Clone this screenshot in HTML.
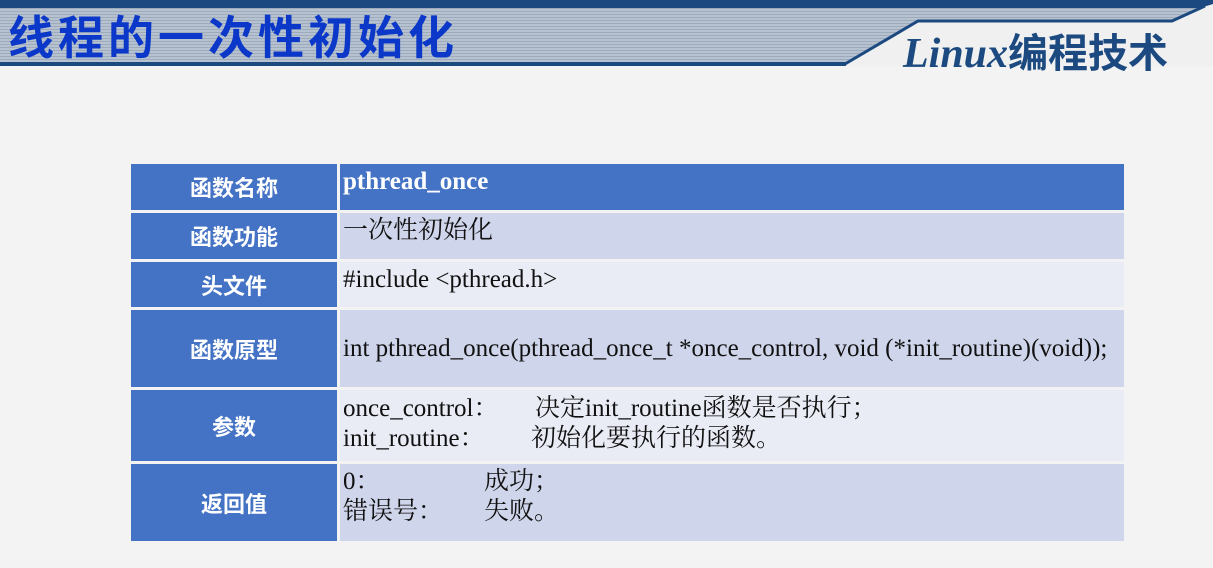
<!DOCTYPE html>
<html><head><meta charset="utf-8"><style>
body{margin:0;width:1213px;height:568px;background:#f3f3f3;position:relative;overflow:hidden;font-family:"Liberation Serif","Noto Serif CJK SC",serif;}
.c{position:absolute;box-sizing:border-box}
.l{left:131px;width:206px;background:#4472c4;color:#fff;font-family:"Liberation Sans","Noto Sans CJK SC",sans-serif;font-weight:bold;font-size:22px;display:flex;align-items:center;justify-content:center}
.r{left:340px;width:784px;padding-left:3px;font-size:25px;color:#111;line-height:30px;white-space:nowrap}
.a{background:#cfd5ea}.b{background:#e9ebf5}
.i{display:inline-block}
</style></head><body>
<svg class="c" style="left:0;top:0" width="1213" height="70">
<defs><pattern id="s" width="4" height="3" patternUnits="userSpaceOnUse"><rect width="4" height="3" fill="#b7c2d0"/><rect y="2" width="4" height="1" fill="#9eabbd"/></pattern></defs>
<rect x="0" y="0" width="1213" height="70" fill="#f0f0f0"/>
<polygon points="0,8 1200,8 1172,21 918,21 845,63 0,63" fill="url(#s)"/>
<polygon points="0,0 1213,0 1213,4 1200,8 0,8" fill="#1c4a80"/>
<polyline points="1205,6 1172,21 918,21 845,64" fill="none" stroke="#1c4a80" stroke-width="3"/>
<rect x="0" y="62" width="846" height="4" fill="#1c4a80"/>
<rect x="0" y="66" width="1213" height="4" fill="#f3f3f3"/>
</svg>
<div class="c" style="left:8px;top:8px;font-family:'WenQuanYi Zen Hei','Noto Sans CJK SC',sans-serif;font-weight:bold;font-size:46px;color:#0b38c8;letter-spacing:4px;line-height:54px;white-space:nowrap">线程的一次性初始化</div>
<div class="c" style="left:903px;top:26px;font-size:42px;font-style:italic;color:#1c4a80;line-height:48px;font-weight:bold;white-space:nowrap">Linux<span style="font-family:'Noto Sans CJK SC',sans-serif;font-style:normal;font-size:40px">编程技术</span></div>

<div class="c l" style="top:164px;height:46px">函数名称</div>
<div class="c r" style="top:164px;height:46px;background:#4472c4;color:#fff;font-weight:bold;padding-top:3px">pthread_once</div>
<div class="c l" style="top:213px;height:46px">函数功能</div>
<div class="c r a" style="top:213px;height:46px;padding-top:3px">一次性初始化</div>
<div class="c l" style="top:262px;height:45px">头文件</div>
<div class="c r b" style="top:262px;height:45px;padding-top:3px">#include &lt;pthread.h&gt;</div>
<div class="c l" style="top:310px;height:77px">函数原型</div>
<div class="c r a" style="top:310px;height:77px;padding-top:24px">int pthread_once(pthread_once_t *once_control, void (*init_routine)(void));</div>
<div class="c l" style="top:390px;height:71px">参数</div>
<div class="c r b" style="top:390px;height:71px;padding-top:4px"><span class="i" style="width:192px">once_control：</span>决定init_routine函数是否执行；<br><span class="i" style="width:188px">init_routine：</span>初始化要执行的函数。</div>
<div class="c l" style="top:464px;height:77px">返回值</div>
<div class="c r a" style="top:464px;height:77px;padding-top:3px"><span class="i" style="width:141px">0：</span>成功；<br><span class="i" style="width:141px">错误号：</span>失败。</div>
</body></html>
